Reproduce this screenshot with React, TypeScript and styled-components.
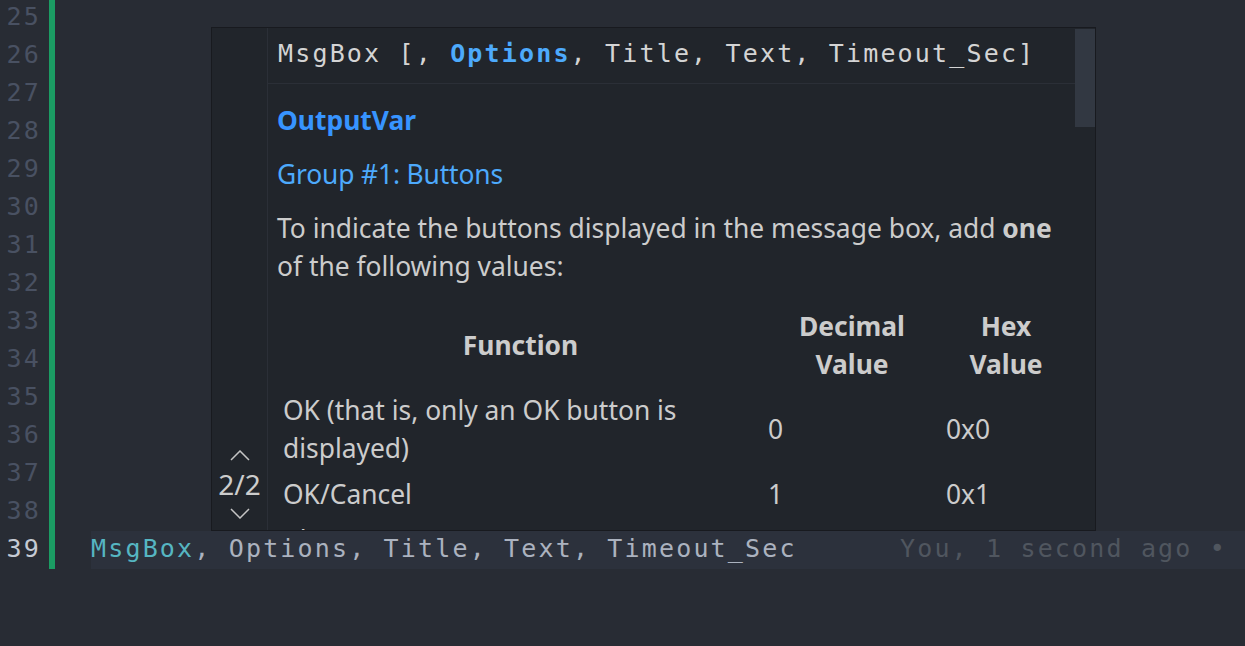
import React from 'react';
import styled, { createGlobalStyle } from 'styled-components';

const MONO = `"DejaVu Sans Mono", "Liberation Mono", monospace`;
const SANS = `"Noto Sans", "Open Sans", sans-serif`;

const GlobalStyle = createGlobalStyle`
  html, body {
    margin: 0;
    padding: 0;
    background: #282c34;
  }
  body {
    overflow: hidden;
  }
`;

const Editor = styled.div`
  position: relative;
  width: 1245px;
  height: 646px;
  overflow: hidden;
  background: #282c34;
  font-family: ${MONO};
  font-size: 25px;
  letter-spacing: 2.16px;
`;

const Lines = styled.div`
  margin-top: -1px;
`;

const Line = styled.div`
  display: flex;
  height: 38px;
  line-height: 35px;
`;

const LineNumber = styled.div<{ $active?: boolean }>`
  width: 41px;
  text-align: right;
  color: ${(p) => (p.$active ? '#c5cad3' : '#495162')};
`;

const ChangeBar = styled.div`
  width: 6px;
  margin-left: 8px;
  background: #1b9c63;
`;

const Code = styled.div<{ $current?: boolean }>`
  flex: 1;
  margin-left: 36px;
  white-space: pre;
  color: #abb2bf;
  background: ${(p) => (p.$current ? '#2c313c' : 'transparent')};
`;

const Fn = styled.span`
  color: #56b6c2;
`;

const Ghost = styled.span`
  color: #50565f;
`;

const Hover = styled.div`
  position: absolute;
  left: 211px;
  top: 27px;
  width: 883px;
  height: 502px;
  border: 1px solid #181a1f;
  background: #21252b;
  display: flex;
  overflow: hidden;
`;

const Side = styled.div`
  width: 56px;
  border-right: 1px solid #2b2f37;
  display: flex;
  flex-direction: column;
  align-items: center;
  justify-content: flex-end;
  padding-bottom: 11px;
  box-sizing: border-box;
`;

const Counter = styled.div`
  margin: 8px 0 9px;
  font-family: ${SANS};
  font-size: 28px;
  line-height: 30px;
  letter-spacing: 0;
  color: #cccccc;
`;

const Chevron = styled.svg`
  display: block;
`;

const Content = styled.div`
  position: relative;
  flex: 1;
  display: flex;
  flex-direction: column;
  min-width: 0;
`;

const Signature = styled.div`
  padding: 7px 0 10px 10px;
  border-bottom: 1px solid #2b2f37;
  line-height: 38px;
  white-space: pre;
  color: #d4d4d4;
`;

const Param = styled.span`
  color: #4daafc;
  font-weight: bold;
`;

const Body = styled.div`
  flex: 1;
  overflow: hidden;
  padding: 17px 19px 0 9px;
  font-family: ${SANS};
  font-size: 26.4px;
  line-height: 38px;
  letter-spacing: 0;
  color: #cccccc;
`;

const Heading = styled.div`
  color: #3794ff;
  font-weight: bold;
`;

const Link = styled.div`
  margin-top: 16px;
  color: #4daafc;
  letter-spacing: -0.15px;
`;

const Para = styled.p`
  margin: 16px 0 0;
`;

const Table = styled.table`
  margin-top: 18px;
  border-collapse: collapse;
  table-layout: fixed;
  width: 793px;
`;

const Head = styled.th`
  padding: 4px 4px 4px 6px;
  font-weight: bold;
  text-align: center;
  vertical-align: middle;
`;

const Cell = styled.td`
  padding: 4px 4px 4px 6px;
  text-align: left;
  vertical-align: middle;
`;

const Thumb = styled.div`
  position: absolute;
  right: 0;
  top: 1px;
  width: 20px;
  height: 98px;
  background: #323842;
`;

const rows = [
  { fn: 'OK (that is, only an OK button is displayed)', dec: '0', hex: '0x0' },
  { fn: 'OK/Cancel', dec: '1', hex: '0x1' },
  { fn: 'Abort/Retry/Ignore', dec: '2', hex: '0x2' },
];

const numbers = Array.from({ length: 15 }, (_, i) => 25 + i);

const App = () => (
  <>
    <GlobalStyle />
    <Editor>
      <Lines>
        {numbers.map((n) => (
          <Line key={n}>
            <LineNumber $active={n === 39}>{n}</LineNumber>
            <ChangeBar />
            <Code $current={n === 39}>
              {n === 39 && (
                <>
                  <Fn>MsgBox</Fn>, Options, Title, Text, Timeout_Sec
                  <Ghost>{'      You, 1 second ago •'}</Ghost>
                </>
              )}
            </Code>
          </Line>
        ))}
      </Lines>

      <Hover>
        <Side>
          <Chevron width="20" height="11" viewBox="0 0 20 11">
            <polyline points="1,10 10,1 19,10" fill="none" stroke="#c5c5c5" strokeWidth="1.5" />
          </Chevron>
          <Counter>2/2</Counter>
          <Chevron width="20" height="11" viewBox="0 0 20 11">
            <polyline points="1,1 10,10 19,1" fill="none" stroke="#c5c5c5" strokeWidth="1.5" />
          </Chevron>
        </Side>
        <Content>
          <Signature>
            MsgBox [, <Param>Options</Param>, Title, Text, Timeout_Sec]
          </Signature>
          <Body>
            <Heading>OutputVar</Heading>
            <Link>Group #1: Buttons</Link>
            <Para>
              To indicate the buttons displayed in the message box, add <b>one</b> of the following values:
            </Para>
            <Table>
              <colgroup>
                <col style={{ width: 485 }} />
                <col style={{ width: 178 }} />
                <col style={{ width: 130 }} />
              </colgroup>
              <thead>
                <tr>
                  <Head>Function</Head>
                  <Head>Decimal Value</Head>
                  <Head>Hex Value</Head>
                </tr>
              </thead>
              <tbody>
                {rows.map((r) => (
                  <tr key={r.hex}>
                    <Cell>{r.fn}</Cell>
                    <Cell>{r.dec}</Cell>
                    <Cell>{r.hex}</Cell>
                  </tr>
                ))}
              </tbody>
            </Table>
          </Body>
          <Thumb />
        </Content>
      </Hover>
    </Editor>
  </>
);

export default App;
